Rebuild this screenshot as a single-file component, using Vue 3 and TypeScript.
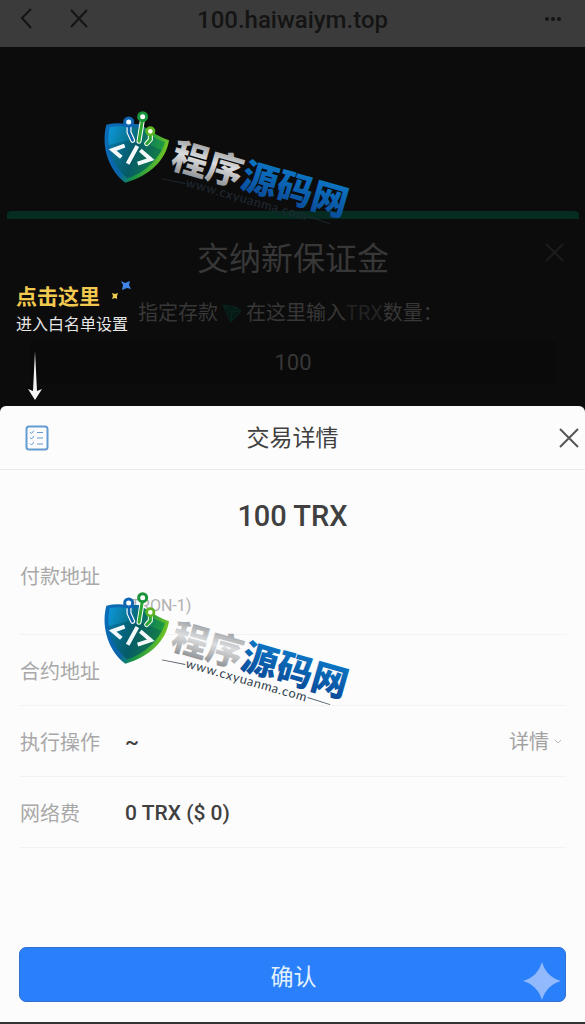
<script setup lang="ts">
import { ref } from 'vue'

interface Mark {
  id: string
  tone: string
}

const marks: Mark[] = [
  { id: 'upper', tone: 'on-dark' },
  { id: 'lower', tone: 'on-light' },
]
const amount = ref<string>('100')
</script>

<template>
  <div class="page">
    <header class="topbar">
      <div class="nav">
        <button type="button" class="icon-btn" aria-label="返回">
          <svg width="24" height="24" viewBox="0 0 24 24"><path d="M11 3 2 12 11 22" /></svg>
        </button>
        <button type="button" class="icon-btn" aria-label="关闭页面">
          <svg width="24" height="24" viewBox="0 0 24 24"><path d="M3 4 19 21M19 4 3 21" /></svg>
        </button>
      </div>
      <h1>100.haiwaiym.top</h1>
      <button type="button" class="icon-btn more" aria-label="更多">
        <svg width="24" height="24" viewBox="0 0 24 24"><circle cx="6" cy="13" r="2" /><circle cx="12" cy="13" r="2" /><circle cx="18" cy="13" r="2" /></svg>
      </button>
    </header>

    <section class="stage">
      <div class="modal">
        <div class="modal-head">
          <h2>交纳新保证金</h2>
          <button type="button" class="icon-btn modal-close" aria-label="关闭">
            <svg width="24" height="24" viewBox="0 0 24 24"><path d="M3 3 20 20M20 3 3 20" /></svg>
          </button>
        </div>
        <label class="hint" for="amount">
          <span>指定存款</span>
          <svg class="gem" width="20" height="20" viewBox="0 0 20 20"><path d="M1 2 14 4 19 8 9 19ZM1 2 10 9 9 19M10 9 19 8M10 9 14 4" /></svg>
          <span>在这里输入<span class="dim">TRX</span>数量：</span>
        </label>
        <input id="amount" v-model="amount" class="amount" type="text" />
      </div>
      <div class="callout">
        <strong>点击这里</strong>
        <span>进入白名单设置</span>
        <svg class="sparks" width="24" height="24" viewBox="0 0 24 24">
          <path fill="#3f86e8" d="m12 2 4 2 5-2-1 4 2 4-4-1-5 2 1-5Z" />
          <path fill="#edcb4e" d="m3 14 3 1 3-1-1 3 0 3-2-1-3 1 1-3Z" />
        </svg>
        <svg class="arrow" width="16" height="50" viewBox="0 0 16 50">
          <path fill="#f4f4f4" d="M8 0 10 40 15 38 8 49 1 38 6 40Z" />
        </svg>
      </div>
    </section>

    <main class="sheet">
      <div class="sheet-head">
        <button type="button" class="icon-btn list-btn" aria-label="白名单设置">
          <svg width="24" height="26" viewBox="0 0 24 26">
            <rect x="1.500" y="1.500" width="21" height="23" rx="2.500" />
            <path class="thin" d="m5 7 1.500 1.500L9 5.500M12 7.500h6M5 12.500 6.500 14 9 11M12 13h6M5 18.500 6.500 20 9 17M12 19h6" />
          </svg>
        </button>
        <h2>交易详情</h2>
        <button type="button" class="icon-btn sheet-close" aria-label="关闭">
          <svg width="24" height="24" viewBox="0 0 24 24"><path d="M3 3 21 21M21 3 3 21" /></svg>
        </button>
      </div>
      <p class="total">100 TRX</p>
      <dl>
        <div class="row tall">
          <dt>付款地址</dt>
          <dd class="chain">(TRON-1)</dd>
        </div>
        <div class="row">
          <dt>合约地址</dt>
          <dd></dd>
        </div>
        <div class="row">
          <dt>执行操作</dt>
          <dd>~</dd>
          <dd class="extra">
            <button type="button" class="detail">
              详情
              <svg width="8" height="8" viewBox="0 0 8 8"><path d="m1 2 3 3 3-3" /></svg>
            </button>
          </dd>
        </div>
        <div class="row">
          <dt>网络费</dt>
          <dd>0 TRX ($ 0)</dd>
        </div>
      </dl>
      <div class="action">
        <button type="button" class="confirm">确认</button>
        <svg class="star" width="38" height="38" viewBox="0 0 38 38"><path d="M19 0C22 10 28 16 38 19 28 22 22 28 19 38 16 28 10 22 0 19 10 16 16 10 19 0Z" /></svg>
      </div>
    </main>

    <svg
      v-for="m in marks"
      :key="m.id"
      class="mark"
      :class="[m.id, m.tone]"
      width="270"
      height="130"
      viewBox="0 0 810 390"
    >
      <defs>
        <linearGradient :id="m.id + '-edge'" x1="0" y1="0.200" x2="1" y2="0.500">
          <stop offset="0" stop-color="#0b6cb8" />
          <stop offset="0.400" stop-color="#0a64a8" />
          <stop offset="0.600" stop-color="#159247" />
          <stop offset="1" stop-color="#7dca21" />
        </linearGradient>
        <linearGradient :id="m.id + '-core'" x1="0" y1="0.200" x2="1" y2="0.500">
          <stop offset="0" stop-color="#0c92d2" />
          <stop offset="0.500" stop-color="#07686f" />
          <stop offset="1" stop-color="#23a238" />
        </linearGradient>
        <linearGradient :id="m.id + '-silver'" x1="0" y1="0" x2="0" y2="1">
          <stop offset="0.150" stop-color="#96999c" />
          <stop offset="0.500" stop-color="#dcddde" />
          <stop offset="0.850" stop-color="#96999c" />
        </linearGradient>
        <linearGradient :id="m.id + '-blue'" x1="0" y1="0" x2="0" y2="1">
          <stop offset="0.100" stop-color="#0c7ccb" />
          <stop offset="0.900" stop-color="#0a4b98" />
        </linearGradient>
      </defs>
      <path :fill="`url(#${m.id}-edge)`" d="M49 74Q78 67 112 72L146 72 172 86Q202 108 237 121C229 179 178 229 106 248C60 214 31 143 49 74Z" />
      <path :fill="`url(#${m.id}-core)`" d="M59 82Q88 76 116 82L146 84 166 97Q192 116 225 126C212 174 169 216 112 235C70 201 46 143 59 82Z" />
      <path fill="#04465a" opacity="0.350" d="M55 136 134 116 215 150Q175 215 112 235C75 203 60 170 55 136Z" />
      <g fill="none" stroke-linecap="round" stroke-linejoin="round">
        <path stroke="#fff" stroke-width="15" d="M117 78V97L128 121M157 61 147 124M181 105V119L170 131" />
        <path stroke="#0c65a6" stroke-width="8" d="M117 78V97L128 121" />
        <path stroke="#2ca632" stroke-width="9" d="M157 61 147 124M181 105V119L170 131" />
        <circle cx="116" cy="66" r="12" fill="#fff" stroke="#0f66b3" stroke-width="9" />
        <circle cx="158" cy="50" r="12" fill="#fff" stroke="#19943b" stroke-width="9" />
        <circle cx="181" cy="94" r="11" fill="#fff" stroke="#5cb421" stroke-width="8" />
      </g>
      <path fill="none" stroke="#f4f8f9" stroke-width="12" d="M104 137 68 150 94 172M142 138 113 191M151 151 182 178 143 191" />
      <g transform="rotate(16 510 245)">
        <g class="brand">
          <text x="236" y="278" :fill="`url(#${m.id}-silver)`">程序</text>
          <text x="454" y="278" :fill="`url(#${m.id}-blue)`">源码网</text>
        </g>
        <path class="rule" d="M225 318 296 312M676 306 747 308" />
        <text class="url" x="486" y="320">www.cxyuanma.com</text>
      </g>
    </svg>
  </div>
</template>

<style scoped>
.page {
  position: relative;
  display: flex;
  flex-direction: column;
  min-height: 100vh;
  box-sizing: border-box;
  overflow: hidden;
  background: #0c0c0c;
  border-bottom: 2px solid #333;
  font-family: Roboto, "Noto Sans CJK SC", sans-serif;
}
h1, h2, p, dl, dd { margin: 0; }
button, input { font: inherit; }
.icon-btn {
  display: flex;
  padding: 0;
  border: 0;
  background: none;
  color: inherit;
}
svg { display: block; flex: none; }
.icon-btn svg { fill: none; stroke: currentColor; stroke-width: 2; }
.topbar {
  display: grid;
  grid-template-columns: 1fr auto 1fr;
  align-items: start;
  height: 47px;
  box-sizing: border-box;
  padding: 6px 20px 0;
  background: #3b3b3b;
  color: #141414;
}
.nav { display: flex; gap: 24px; }
.topbar h1 { font-size: 24px; line-height: 28px; font-weight: 500; }
.more { justify-self: end; }
.icon-btn.more svg { fill: currentColor; stroke: none; }
.stage {
  position: relative;
  height: 359px;
  box-sizing: border-box;
  padding: 164px 6px 0 7px;
}
.modal {
  border-top: 8px solid #062b21;
  border-radius: 4px;
  color: #373737;
}
.modal-head {
  display: grid;
  grid-template-columns: 1fr auto 1fr;
  padding: 18px 12px 0;
}
.modal-head h2 {
  grid-column: 2;
  font-size: 32px;
  line-height: 44px;
  font-weight: 400;
}
.modal-close { justify-self: end; align-self: start; margin-top: 4px; color: #1d1d1d; }
.hint {
  display: flex;
  align-items: center;
  gap: 4px;
  padding: 14px 0 0 131px;
  font-size: 20px;
  line-height: 36px;
  white-space: nowrap;
}
.gem { fill: #061914; stroke: #08261e; }
.dim { color: #222; }
.amount {
  display: block;
  width: calc(100% - 46px);
  height: 44px;
  margin: 9px 23px 0;
  box-sizing: border-box;
  padding: 0;
  border: 0;
  border-radius: 6px;
  background: #0a0a0a;
  color: #373737;
  font-size: 22px;
  text-align: center;
}
.callout {
  position: absolute;
  left: 16px;
  top: 236px;
  display: flex;
  flex-direction: column;
  color: #e6e6e6;
  font-size: 16px;
  line-height: 28px;
}
.callout strong { color: #f2c94f; font-size: 21px; line-height: 28px; font-weight: 700; }
.sparks { position: absolute; left: 93px; top: -4px; }
.arrow { margin: 12px 0 0 11px; }
.sheet {
  flex: 1;
  display: flex;
  flex-direction: column;
  border-radius: 6px 6px 0 0;
  background: #fcfcfc;
  color: #404040;
}
.sheet-head {
  display: grid;
  grid-template-columns: 1fr auto 1fr;
  align-items: center;
  height: 64px;
  box-sizing: border-box;
  padding: 0 4px;
  border-bottom: 1px solid #e9e9e9;
}
.sheet-head h2 { font-size: 23px; line-height: 32px; font-weight: 400; padding-top: 2px; }
.list-btn { justify-self: start; margin-left: 21px; color: #639bd2; }
.list-btn .thin { stroke-width: 1; }
.sheet-close { justify-self: end; color: #555; }
.total {
  padding: 28px 0 21px;
  font-size: 29px;
  line-height: 36px;
  font-weight: 500;
  text-align: center;
}
dl { padding: 0 19px 0 20px; }
.row {
  display: flex;
  align-items: center;
  height: 71px;
  box-sizing: border-box;
  border-bottom: 1px solid #f3f3f3;
  font-size: 20px;
}
.row.tall { height: 80px; align-items: flex-start; }
dt { width: 105px; color: #a8a8a8; line-height: 28px; margin-top: 4px; }
.row.tall dt { margin-top: 8px; }
dd { font-size: 21px; line-height: 28px; font-weight: 500; margin-top: 2px; }
.row .chain { font-size: 16px; line-height: 24px; font-weight: 400; color: #b0b0b0; margin-top: 39px; }
.extra { margin-left: auto; }
.detail {
  display: flex;
  align-items: center;
  gap: 5px;
  padding: 0 4px 0 0;
  border: 0;
  background: none;
  color: #a2a2a2;
  font-size: 20px;
  font-weight: 400;
}
.detail svg { fill: none; stroke: #b8b8b8; }
.action { position: relative; margin-top: auto; padding: 0 19px 20px; }
.confirm {
  display: block;
  width: 100%;
  height: 55px;
  padding: 0 0 0 2px;
  border: 1px solid #3271c9;
  border-radius: 7px;
  background: #2a80fa;
  color: #e3f1ff;
  font-size: 23px;
}
.star { position: absolute; right: 24px; top: 15px; fill: #91b9fb; }
.mark { position: absolute; left: 90px; pointer-events: none; }
.mark.upper { top: 100px; }
.mark.lower { top: 581px; }
.brand {
  font-family: "Noto Sans CJK SC", sans-serif;
  font-size: 109px;
  font-weight: 900;
}
.url { font-family: Lato, sans-serif; font-size: 38px; letter-spacing: 2px; text-anchor: middle; }
.rule { fill: none; stroke-width: 3; }
.on-dark .url { fill: #202a34; }
.on-dark .rule { stroke: #202a34; }
.on-light .url { fill: #303c49; }
.on-light .rule { stroke: #59626b; }
</style>

<style>
body { margin: 0; background: #0c0c0c; }
</style>
